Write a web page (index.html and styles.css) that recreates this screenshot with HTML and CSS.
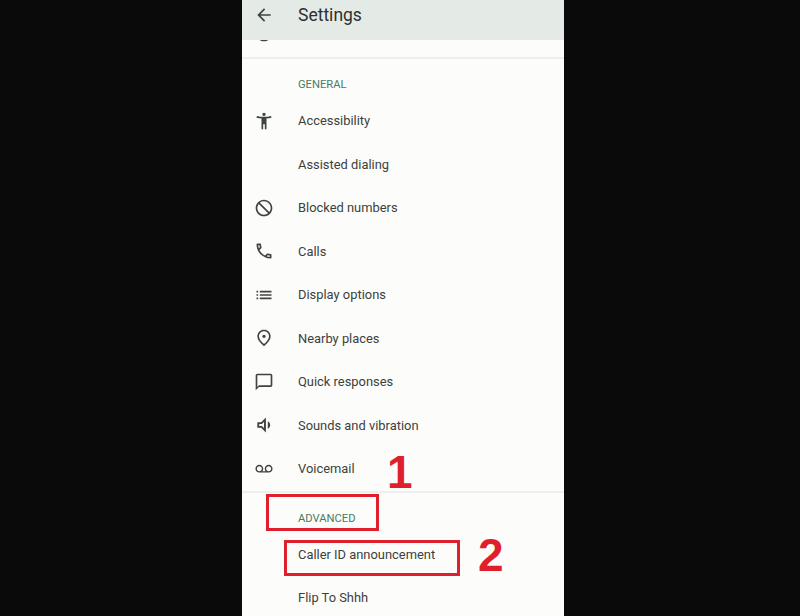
FILE: index.html
```html
<!DOCTYPE html>
<html lang="en">
<head>
  <meta charset="UTF-8" />
  <title>Settings</title>
  <link rel="stylesheet" href="styles.css">
</head>
<body>
  <div class="phone">
    <!-- Top bar -->
    <div class="app-bar">
      <svg class="icon back-icon" viewBox="0 0 24 24"><path d="M20 11H7.83l5.59-5.59L12 4l-8 8 8 8 1.41-1.41L7.83 13H20v-2z"/></svg>
      <div class="app-title">Settings</div>
    </div>

    <!-- Row scrolled under the top bar -->
    <div class="scrolled-row">
      <div class="row">
        <svg class="icon" viewBox="0 0 24 24"><path d="M12 2C6.48 2 2 6.48 2 12s4.48 10 10 10 10-4.48 10-10S17.52 2 12 2zm0 18c-4.42 0-8-3.58-8-8s3.58-8 8-8 8 3.58 8 8-3.58 8-8 8z"/></svg>
        <span>Caller ID &amp; spam</span>
      </div>
    </div>

    <!-- General section -->
    <div class="section">
      <div class="section-label general-label">GENERAL</div>
      <div class="row">
        <svg class="icon" viewBox="0 0 24 24"><path d="M20.5 6c-2.61.7-5.67 1-8.5 1s-5.89-.3-8.5-1L3 8c1.86.5 4 .83 6 1v13h2v-6h2v6h2V9c2-.17 4.14-.5 6-1l-.5-2zM12 6c1.1 0 2-.9 2-2s-.9-2-2-2-2 .9-2 2 .9 2 2 2z"/></svg>
        <span>Accessibility</span>
      </div>
      <div class="row">
        <span class="icon"></span>
        <span>Assisted dialing</span>
      </div>
      <div class="row">
        <svg class="icon" viewBox="0 0 24 24"><path d="M12 2C6.48 2 2 6.48 2 12s4.48 10 10 10 10-4.48 10-10S17.52 2 12 2zM4 12c0-1.85.63-3.55 1.69-4.9L16.9 18.31C15.55 19.37 13.85 20 12 20c-4.42 0-8-3.58-8-8zm14.31 4.9L7.1 5.69C8.45 4.63 10.15 4 12 4c4.42 0 8 3.58 8 8 0 1.85-.63 3.55-1.69 4.9z"/></svg>
        <span>Blocked numbers</span>
      </div>
      <div class="row">
        <svg class="icon" viewBox="0 0 24 24"><path d="M6.54 5c.06.89.21 1.76.45 2.59l-1.2 1.2c-.41-1.2-.67-2.47-.76-3.79h1.51m9.86 12.02c.85.24 1.72.39 2.6.45v1.49c-1.32-.09-2.59-.35-3.8-.75l1.2-1.19M7.5 3H4c-.55 0-1 .45-1 1 0 9.39 7.61 17 17 17 .55 0 1-.45 1-1v-3.49c0-.55-.45-1-1-1-1.24 0-2.45-.2-3.57-.57-.1-.04-.21-.05-.31-.05-.26 0-.51.1-.71.29l-2.2 2.2c-2.83-1.45-5.15-3.76-6.59-6.59l2.2-2.2c.28-.28.36-.67.25-1.02C8.7 6.45 8.5 5.25 8.5 4c0-.55-.45-1-1-1z"/></svg>
        <span>Calls</span>
      </div>
      <div class="row">
        <svg class="icon" viewBox="0 0 24 24"><path d="M3 13h2v-2H3v2zm0 4h2v-2H3v2zm0-8h2V7H3v2zm4 4h14v-2H7v2zm0 4h14v-2H7v2zM7 7v2h14V7H7z"/></svg>
        <span>Display options</span>
      </div>
      <div class="row">
        <svg class="icon" viewBox="0 0 24 24"><path d="M12 12c-1.1 0-2-.9-2-2s.9-2 2-2 2 .9 2 2-.9 2-2 2zm6-1.8C18 6.57 15.35 4 12 4s-6 2.57-6 6.2c0 2.34 1.95 5.44 6 9.14 4.05-3.7 6-6.8 6-9.14zM12 2c4.2 0 8 3.22 8 8.2 0 3.32-2.67 7.25-8 11.8-5.33-4.55-8-8.48-8-11.8C4 5.22 7.8 2 12 2z"/></svg>
        <span>Nearby places</span>
      </div>
      <div class="row">
        <svg class="icon" viewBox="0 0 24 24"><path d="M20 2H4c-1.1 0-2 .9-2 2v18l4-4h14c1.1 0 2-.9 2-2V4c0-1.1-.9-2-2-2zm0 14H6l-2 2V4h16v12z"/></svg>
        <span>Quick responses</span>
      </div>
      <div class="row">
        <svg class="icon" viewBox="1.5 1.5 21 21"><path d="M16 7.97v8.05c1.48-.73 2.5-2.25 2.5-4.02 0-1.77-1.02-3.29-2.5-4.03zM5 9v6h4l5 5V4L9 9H5zm7-.17v6.34L9.83 13H7v-2h2.83L12 8.83z"/></svg>
        <span>Sounds and vibration</span>
      </div>
      <div class="row">
        <svg class="icon" viewBox="-2 -2 28 28"><path d="M18.5 6C15.46 6 13 8.46 13 11.5c0 1.33.47 2.55 1.26 3.5H9.74c.79-.95 1.26-2.17 1.26-3.5C11 8.46 8.54 6 5.5 6S0 8.46 0 11.5 2.46 17 5.5 17h13c3.04 0 5.5-2.46 5.5-5.5S21.54 6 18.5 6zm-13 9C3.57 15 2 13.43 2 11.5S3.57 8 5.5 8 9 9.57 9 11.5 7.43 15 5.5 15zm13 0c-1.93 0-3.5-1.57-3.5-3.5S16.57 8 18.5 8 22 9.57 22 11.5 20.43 15 18.5 15z"/></svg>
        <span>Voicemail</span>
      </div>
    </div>

    <!-- Advanced section -->
    <div class="section">
      <div class="section-label advanced-label">ADVANCED</div>
      <div class="row">
        <span class="icon"></span>
        <span>Caller ID announcement</span>
      </div>
      <div class="row">
        <span class="icon"></span>
        <span>Flip To Shhh</span>
      </div>
    </div>

    <!-- Red annotations drawn over the screenshot -->
    <div class="mark-box box-one"></div>
    <div class="mark-box box-two"></div>
    <div class="mark-num num-one">1</div>
    <div class="mark-num num-two">2</div>
  </div>
</body>
</html>
```

FILE: styles.css
```css
body {
  margin: 0;
  height: 616px;
  overflow: hidden;
  background: #0a0a0a;
  padding-left: 242px;
  font-family: Roboto, 'Liberation Sans', sans-serif;
}
.phone {
  position: relative;
  width: 322px;
  height: 616px;
  overflow: hidden;
  background: #fcfdfa;
}
/* Top bar */
.app-bar {
  height: 40px;
  background: #e4ebe6;
  display: flex;
  align-items: center;
  padding-left: 12px;
  gap: 24px;
  box-sizing: border-box;
}
.app-title {
  font-size: 17.5px;
  color: #2c302e;
  margin-top: -10px;
}
.back-icon {
  margin-top: -10px;
}
/* Row hidden behind the bar, only its bottom edge shows */
.scrolled-row {
  height: 17px;
  overflow: hidden;
}
.scrolled-row .row {
  margin-top: -29px;
}
/* Sections */
.section {
  border-top: 2px solid #edefec;
}
.section-label {
  font-size: 11.2px;
  color: #4a7a66;
  padding-left: 56px;
  display: flex;
  align-items: center;
}
.general-label {
  height: 51px;
  margin-bottom: -11px;
}
.advanced-label {
  height: 40px;
  padding-top: 12px;
  box-sizing: border-box;
}
/* List rows */
.row {
  height: 43.5px;
  display: flex;
  align-items: center;
  gap: 24px;
  padding-left: 12px;
  font-size: 12.9px;
  color: #3c403e;
}
.icon {
  width: 20px;
  height: 20px;
  flex: none;
  fill: #3f4341;
}
/* Annotations */
.mark-box {
  position: absolute;
  border: 3px solid #e01f2d;
  box-sizing: border-box;
}
.box-one {
  left: 24px;
  top: 494px;
  width: 113px;
  height: 37px;
}
.box-two {
  left: 42px;
  top: 540px;
  width: 176px;
  height: 36px;
}
.mark-num {
  position: absolute;
  font-family: 'Liberation Sans', sans-serif;
  font-weight: bold;
  font-size: 46px;
  line-height: 46px;
  color: #e01f2d;
}
.num-one {
  left: 145px;
  top: 449px;
}
.num-two {
  left: 236px;
  top: 532px;
}
```
